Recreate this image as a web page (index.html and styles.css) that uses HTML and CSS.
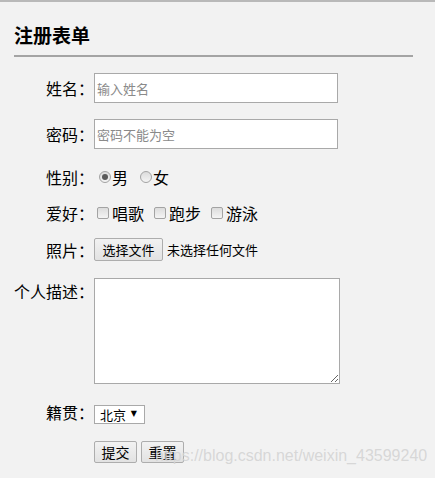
FILE: index.html
```html
<!DOCTYPE html>
<html lang="zh-CN">
<head>
<meta charset="utf-8">
<title>注册表单</title>
<link rel="stylesheet" href="styles.css">
</head>
<body>
<div class="page">
  <h2 class="title">注册表单</h2>
  <form class="form">
    <div class="row r-30">
      <label class="lbl">姓名：</label>
      <input class="text" type="text" placeholder="输入姓名">
    </div>
    <div class="row r-30">
      <label class="lbl">密码：</label>
      <input class="text" type="password" placeholder="密码不能为空">
    </div>
    <div class="row r-24">
      <label class="lbl">性别：</label>
      <input class="radio first" type="radio" name="sex" checked><span class="opt">男</span>
      <input class="radio next" type="radio" name="sex"><span class="opt">女</span>
    </div>
    <div class="row r-16">
      <label class="lbl">爱好：</label>
      <input class="check first" type="checkbox"><span class="opt">唱歌</span>
      <input class="check next" type="checkbox"><span class="opt">跑步</span>
      <input class="check next" type="checkbox"><span class="opt">游泳</span>
    </div>
    <div class="row r-25">
      <label class="lbl">照片：</label>
      <button class="btn file" type="button">选择文件</button><span class="nofile">未选择任何文件</span>
    </div>
    <div class="row r-top">
      <label class="lbl lbl-top">个人描述：</label>
      <textarea class="area"></textarea>
    </div>
    <div class="row r-24 end">
      <label class="lbl">籍贯：</label>
      <span class="selwrap"><select class="sel"><option>北京</option><option>上海</option></select></span>
    </div>
    <div class="row r-23 end">
      <span class="lbl"></span>
      <button class="btn act" type="submit">提交</button>
      <button class="btn act gap" type="reset">重置</button>
    </div>
  </form>
</div>
<div class="watermark">https://blog.csdn.net/weixin_43599240</div>
</body>
</html>
```

FILE: styles.css
```css
html, body {
  margin: 0;
  padding: 0;
  background: #f2f2f2;
}
body {
  font-family: "Noto Sans CJK SC", "Microsoft YaHei", sans-serif;
  font-size: 16px;
  color: #000;
  width: 435px;
  height: 478px;
  overflow: hidden;
  position: relative;
}
.page {
  border-top: 2px solid #b9b9b9;
  padding-left: 14px;
}
.title {
  margin: 21px 0 0 0;
  width: 399px;
  font-size: 19px;
  line-height: 24px;
  font-weight: bold;
  padding-bottom: 8px;
  border-bottom: 2px solid #a4a4a4;
}
.form {
  display: flex;
  flex-direction: column;
  gap: 16px;
  margin-top: 16px;
}
.row {
  display: flex;
  align-items: center;
}
.r-30 { height: 30px; }
.r-24 { height: 24px; }
.r-16 { height: 16px; }
.r-25 { height: 25px; }
.r-23 { height: 23px; }
.r-top { align-items: flex-start; }
.end { align-items: flex-end; }
.lbl {
  width: 80px;
  flex: none;
  text-align: right;
  line-height: 24px;
  align-self: center;
}
.lbl-top {
  align-self: flex-start;
  margin-top: 1px;
}
.text {
  box-sizing: border-box;
  width: 244px;
  height: 30px;
  margin: 0;
  border: 1px solid #a9a9a9;
  background: #fff;
  padding: 0 2px;
  font-family: "Noto Sans CJK SC", sans-serif;
  font-size: 13px;
  outline: none;
}
.text::placeholder { color: #8a8a8a; }
.radio, .check {
  -webkit-appearance: none;
  appearance: none;
  box-sizing: border-box;
  width: 12px;
  height: 12px;
  margin: 0 1px 0 0;
  border: 1px solid #a3a3a3;
  background: linear-gradient(#dcdcdc, #f4f4f4);
  flex: none;
  position: relative;
}
.radio { border-radius: 50%; }
.radio.first { margin-left: 5px; }
.radio.next { margin-left: 12px; }
.radio:checked::after {
  content: "";
  position: absolute;
  left: 2px;
  top: 2px;
  width: 6px;
  height: 6px;
  border-radius: 50%;
  background: #5a5a5a;
}
.check { border-radius: 2px; margin-right: 3px; }
.check.first { margin-left: 3px; }
.check.next { margin-left: 10px; }
.opt { line-height: 24px; }
.btn {
  box-sizing: border-box;
  margin: 0;
  border: 1px solid #adadad;
  border-radius: 2px;
  background: linear-gradient(#f2f2f2, #e2e2e2);
  font-family: "Noto Sans CJK SC", sans-serif;
  font-size: 13px;
  color: #000;
  padding: 0;
}
.file {
  width: 69px;
  height: 23px;
}
.nofile {
  font-size: 13px;
  margin-left: 4px;
  line-height: 23px;
}
.area {
  box-sizing: border-box;
  width: 246px;
  height: 106px;
  margin: 0;
  border: 1px solid #a9a9a9;
  background: #fff;
  resize: both;
  outline: none;
}
.selwrap {
  position: relative;
  display: flex;
  width: 51px;
  height: 19px;
}
.selwrap::after {
  content: "▼";
  position: absolute;
  right: 8px;
  top: 4px;
  font-size: 8px;
  line-height: 10px;
  pointer-events: none;
  font-family: "DejaVu Sans", sans-serif;
}
.sel {
  -webkit-appearance: none;
  appearance: none;
  box-sizing: border-box;
  width: 51px;
  height: 19px;
  margin: 0;
  border: 1px solid #a9a9a9;
  border-radius: 0;
  background: #fff;
  padding: 0 0 0 5px;
  font-family: "Noto Sans CJK SC", sans-serif;
  font-size: 13px;
  line-height: 17px;
  color: #000;
}
.act {
  width: 43px;
  height: 22px;
  font-size: 14px;
}
.gap { margin-left: 4px; }
.watermark {
  position: absolute;
  left: 155px;
  top: 447px;
  font-family: "Liberation Sans", Arial, sans-serif;
  font-size: 16px;
  line-height: 18px;
  color: rgba(212, 212, 212, 0.9);
  white-space: nowrap;
  pointer-events: none;
}
```
